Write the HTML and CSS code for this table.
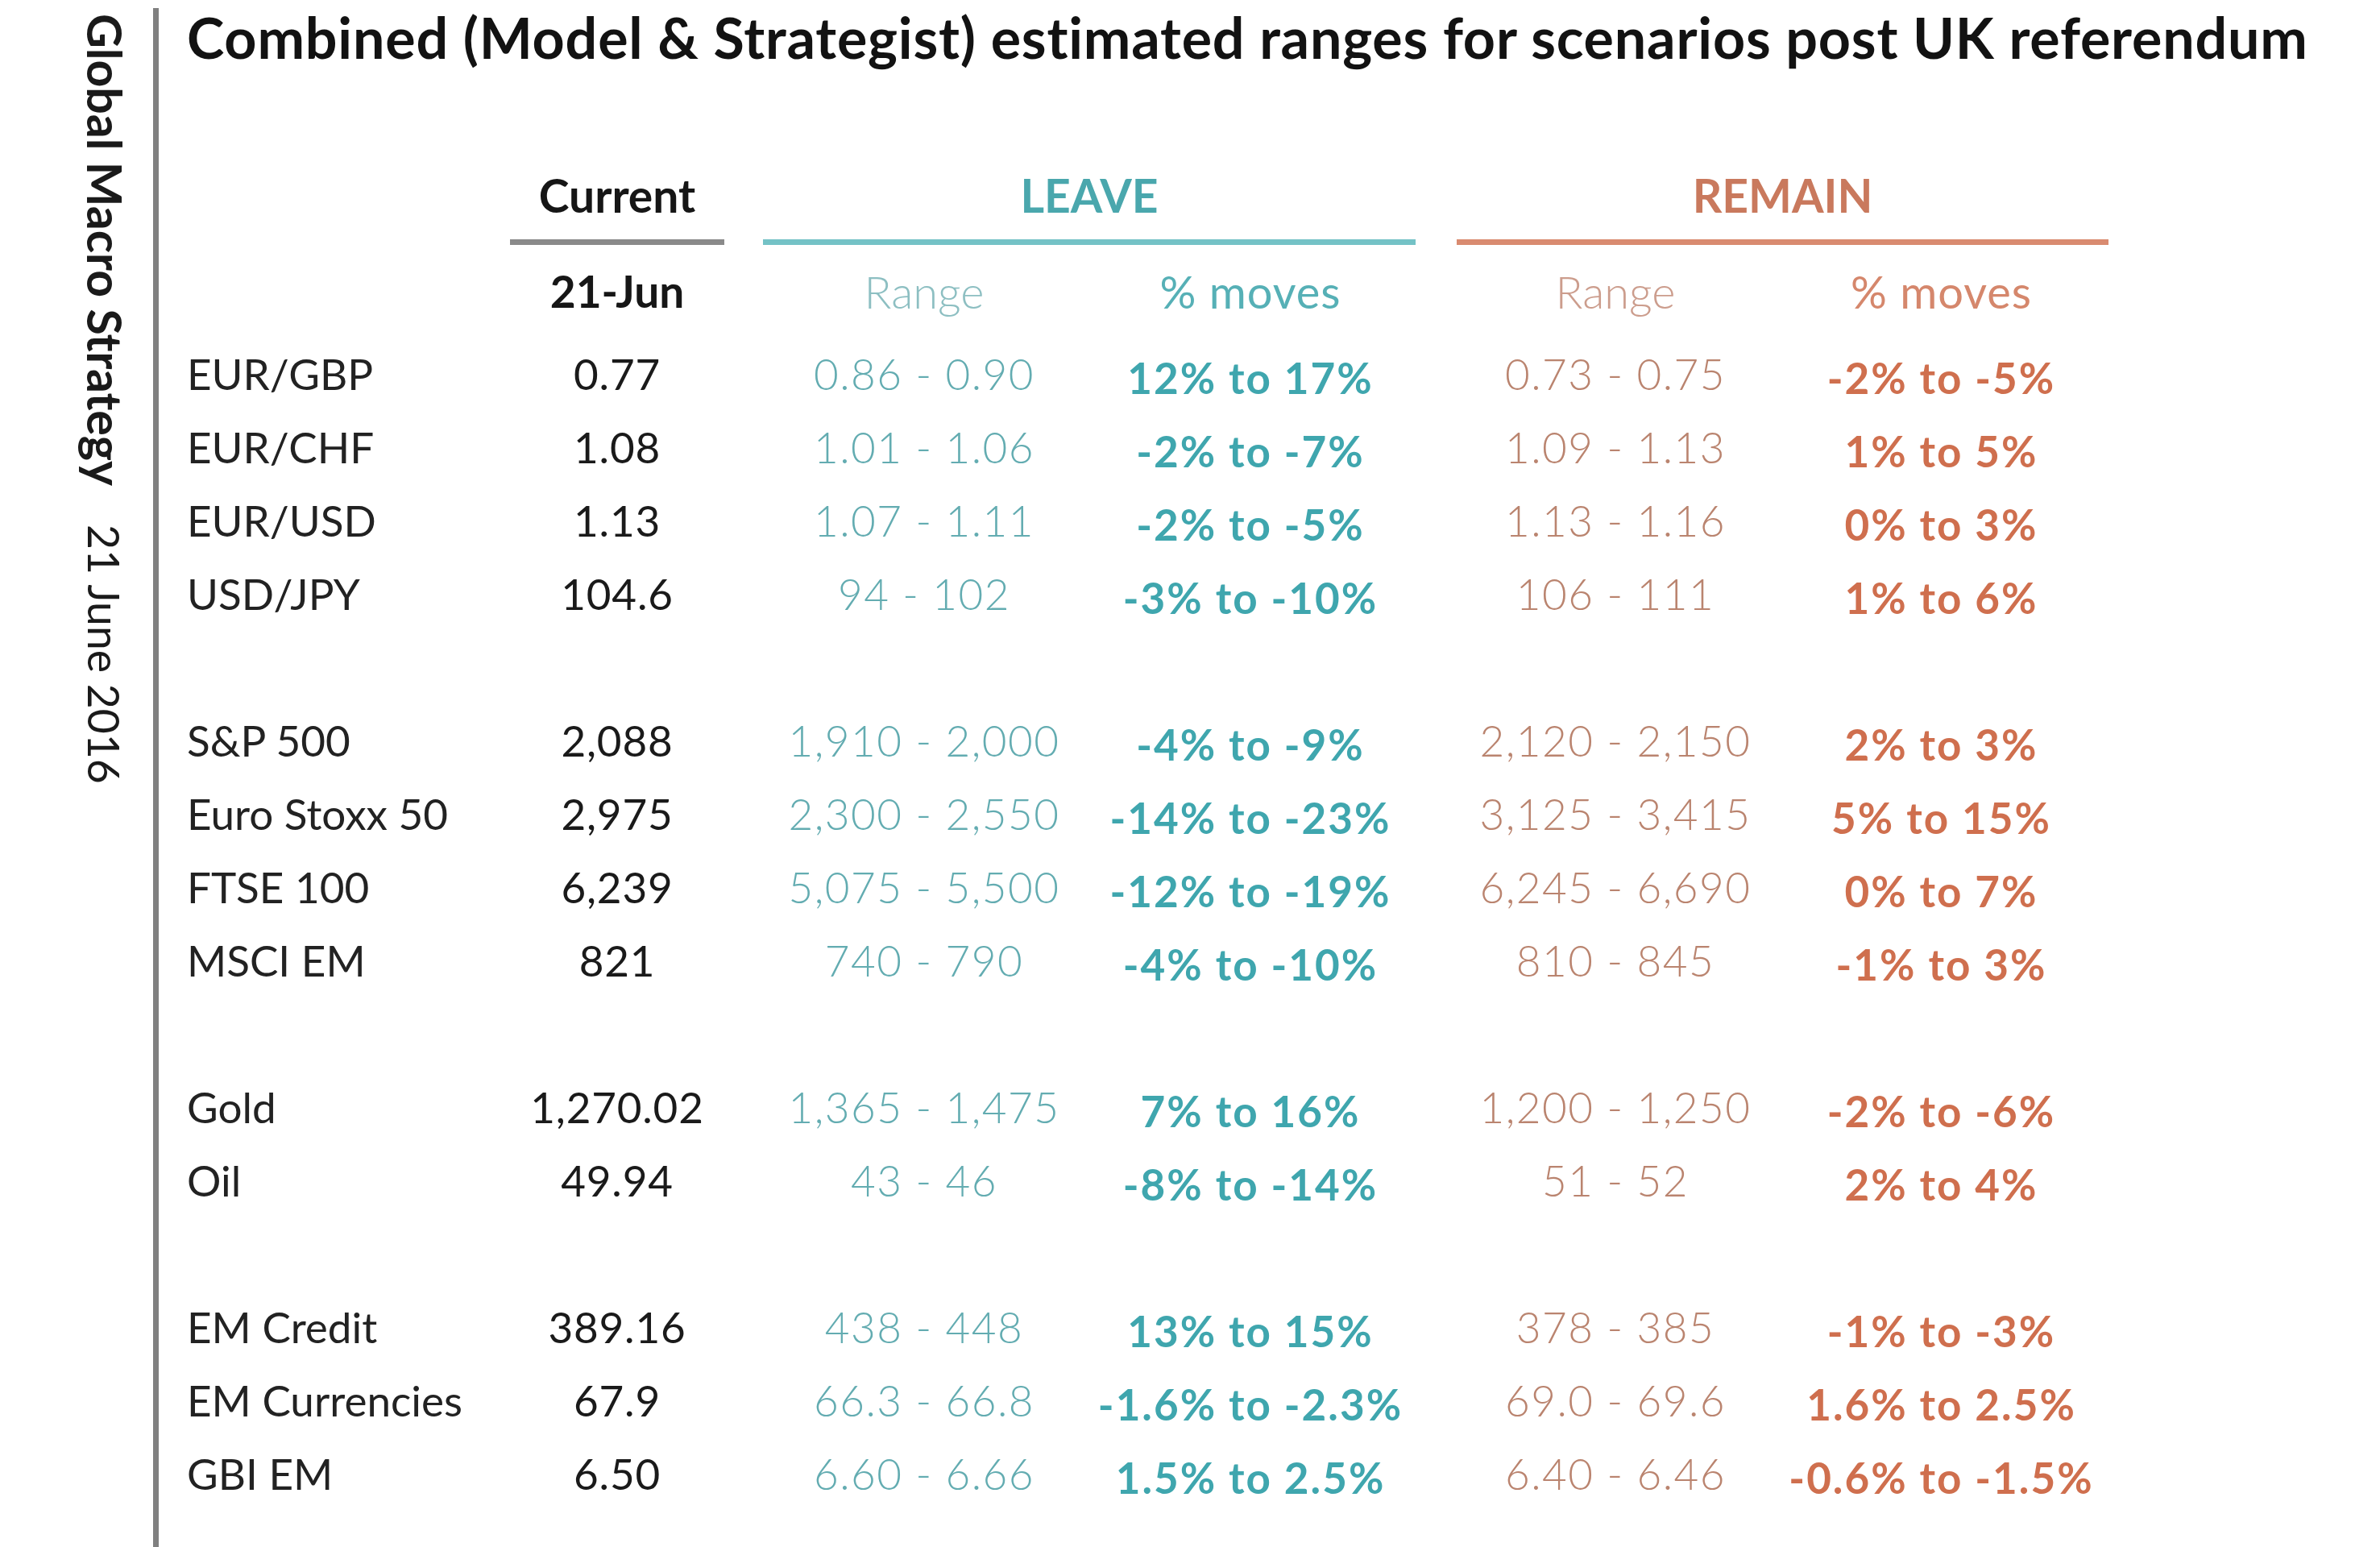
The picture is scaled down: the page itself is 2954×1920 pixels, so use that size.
FILE: index.html
```html
<!DOCTYPE html>
<html lang="en">
<head>
<meta charset="utf-8">
<title>Combined estimated ranges</title>
<link rel="stylesheet" href="styles.css">
</head>
<body>
<div class="page">
  <aside class="side">
    <div class="side-text"><span class="side-strong">Global Macro Strategy</span><span class="side-date">21 June 2016</span></div>
  </aside>
  <div class="rule"></div>
  <main class="main">
    <h1 class="title">Combined (Model &amp; Strategist) estimated ranges for scenarios post UK referendum</h1>
    <div class="table">
      <div class="head1"></div>
      <div class="head1 cur-h">Current</div>
      <div class="head1 leave-h">LEAVE</div>
      <div class="head1 remain-h">REMAIN</div>

      <div class="head2"></div>
      <div class="head2 date-h">21-Jun</div>
      <div class="head2 lr sub-lr">Range</div>
      <div class="head2 sub-lm">% moves</div>
      <div class="head2 rr sub-rr">Range</div>
      <div class="head2 sub-rm">% moves</div>

      <div class="lbl">EUR/GBP</div><div class="cur">0.77</div><div class="lr rng-l">0.86 - 0.90</div><div class="mv mv-l">12% to 17%</div><div class="rr rng-r">0.73 - 0.75</div><div class="mv mv-r">-2% to -5%</div>
      <div class="lbl">EUR/CHF</div><div class="cur">1.08</div><div class="lr rng-l">1.01 - 1.06</div><div class="mv mv-l">-2% to -7%</div><div class="rr rng-r">1.09 - 1.13</div><div class="mv mv-r">1% to 5%</div>
      <div class="lbl">EUR/USD</div><div class="cur">1.13</div><div class="lr rng-l">1.07 - 1.11</div><div class="mv mv-l">-2% to -5%</div><div class="rr rng-r">1.13 - 1.16</div><div class="mv mv-r">0% to 3%</div>
      <div class="lbl">USD/JPY</div><div class="cur">104.6</div><div class="lr rng-l">94 - 102</div><div class="mv mv-l">-3% to -10%</div><div class="rr rng-r">106 - 111</div><div class="mv mv-r">1% to 6%</div>
      <div class="gap"></div>
      <div class="lbl">S&amp;P 500</div><div class="cur">2,088</div><div class="lr rng-l">1,910 - 2,000</div><div class="mv mv-l">-4% to -9%</div><div class="rr rng-r">2,120 - 2,150</div><div class="mv mv-r">2% to 3%</div>
      <div class="lbl">Euro Stoxx 50</div><div class="cur">2,975</div><div class="lr rng-l">2,300 - 2,550</div><div class="mv mv-l">-14% to -23%</div><div class="rr rng-r">3,125 - 3,415</div><div class="mv mv-r">5% to 15%</div>
      <div class="lbl">FTSE 100</div><div class="cur">6,239</div><div class="lr rng-l">5,075 - 5,500</div><div class="mv mv-l">-12% to -19%</div><div class="rr rng-r">6,245 - 6,690</div><div class="mv mv-r">0% to 7%</div>
      <div class="lbl">MSCI EM</div><div class="cur">821</div><div class="lr rng-l">740 - 790</div><div class="mv mv-l">-4% to -10%</div><div class="rr rng-r">810 - 845</div><div class="mv mv-r">-1% to 3%</div>
      <div class="gap"></div>
      <div class="lbl">Gold</div><div class="cur">1,270.02</div><div class="lr rng-l">1,365 - 1,475</div><div class="mv mv-l">7% to 16%</div><div class="rr rng-r">1,200 - 1,250</div><div class="mv mv-r">-2% to -6%</div>
      <div class="lbl">Oil</div><div class="cur">49.94</div><div class="lr rng-l">43 - 46</div><div class="mv mv-l">-8% to -14%</div><div class="rr rng-r">51 - 52</div><div class="mv mv-r">2% to 4%</div>
      <div class="gap"></div>
      <div class="lbl">EM Credit</div><div class="cur">389.16</div><div class="lr rng-l">438 - 448</div><div class="mv mv-l">13% to 15%</div><div class="rr rng-r">378 - 385</div><div class="mv mv-r">-1% to -3%</div>
      <div class="lbl">EM Currencies</div><div class="cur">67.9</div><div class="lr rng-l">66.3 - 66.8</div><div class="mv mv-l">-1.6% to -2.3%</div><div class="rr rng-r">69.0 - 69.6</div><div class="mv mv-r">1.6% to 2.5%</div>
      <div class="lbl">GBI EM</div><div class="cur">6.50</div><div class="lr rng-l">6.60 - 6.66</div><div class="mv mv-l">1.5% to 2.5%</div><div class="rr rng-r">6.40 - 6.46</div><div class="mv mv-r">-0.6% to -1.5%</div>
    </div>
  </main>
</div>
</body>
</html>
```

FILE: styles.css
```css
* { box-sizing: border-box; }
html, body { margin: 0; padding: 0; background: #ffffff; }
body {
  width: 2954px;
  height: 1920px;
  overflow: hidden;
  font-family: "Lato", "Open Sans", "Liberation Sans", sans-serif;
  color: #1c1c1c;
}
.page {
  display: flex;
  align-items: stretch;
  height: 1920px;
}
.side {
  width: 166px;
  padding-left: 94px;
  padding-top: 17px;
}
.side-text {
  writing-mode: vertical-rl;
  font-size: 59px;
  line-height: 72px;
  white-space: nowrap;
  color: #1a1a1a;
}
.side-strong { font-weight: 700; }
.side-date { font-weight: 400; font-size: 53.5px; margin-top: 48px; display: inline-block; }
.rule {
  width: 7px;
  margin-left: 24px;
  margin-top: 10px;
  background: #808080;
}
.main {
  padding-left: 35px;
  padding-top: 8px;
  flex: 1;
}
.title {
  margin: 0;
  font-size: 70px;
  letter-spacing: 0.8px;
  line-height: 77px;
  font-weight: 700;
  color: #121212;
  white-space: nowrap;
}
.table {
  margin-top: 124px;
  display: grid;
  grid-template-columns: 401px 266px 448px 410px 445px 415px;
  grid-auto-rows: 91px;
  font-size: 53px;
  line-height: 91px;
  text-align: center;
}
.head1 {
  font-weight: 700;
  font-size: 57px;
  line-height: 66px;
  height: 95px;
  padding-bottom: 22px;
  align-self: start;
}
.cur-h { border-bottom: 7px solid #8a8a8a; color: #161616; }
.leave-h {
  grid-column: span 2;
  margin-left: 48px;
  border-bottom: 7px solid #74c2c6;
  color: #4aa7ad;
}
.remain-h {
  grid-column: span 2;
  margin-left: 51px;
  border-bottom: 7px solid #d98b70;
  color: #c9795d;
}
.head2 {
  margin-top: 16px;
  font-size: 56px;
  line-height: 91px;
}
.date-h { font-weight: 700; color: #161616; font-size: 55px; }
.sub-lr { color: #8dbfc2; font-weight: 300; }
.sub-lm { color: #56b0b6; letter-spacing: 1px; }
.sub-rr { color: #cc9d8d; font-weight: 300; }
.sub-rm { color: #d5876c; letter-spacing: 1px; }
.lbl { text-align: left; color: #222222; padding-top: 27px; }
.cur { color: #1a1a1a; padding-top: 27px; letter-spacing: 0.8px; }
.lr { padding-left: 48px; }
.rr { padding-left: 51px; }
.rng-l { color: #63acb1; font-weight: 300; padding-top: 27px; letter-spacing: 1.5px; }
.rng-r { color: #ba846f; font-weight: 300; padding-top: 27px; letter-spacing: 1.5px; }
.mv { font-weight: 700; padding-top: 32px; letter-spacing: 2px; }
.mv-l { color: #3fa6ae; }
.mv-r { color: #cf6f4e; }
.gap { grid-column: 1 / -1; }
.head2.lr, .head2.rr { padding-top: 0; }
```
